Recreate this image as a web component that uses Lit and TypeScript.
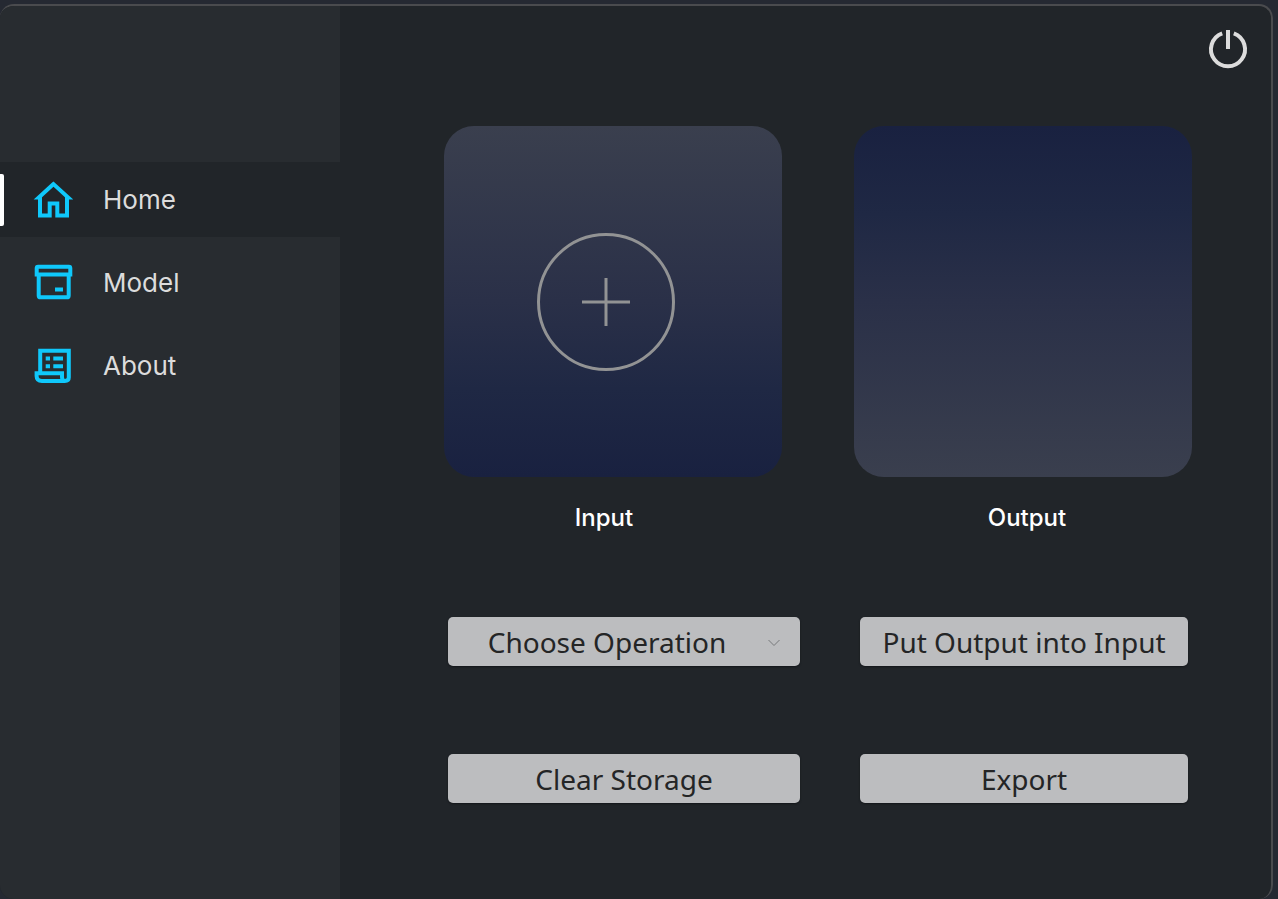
import { LitElement, html, css, svg } from "lit";
import { customElement, state } from "lit/decorators.js";
import { classMap } from "lit/directives/class-map.js";

const homeIcon = svg`
  <path d="M20.5 4.1 5.8 17.5H7V35.5H16.7V23.5H24.3V35.5H34V17.5H35.2Z" />`;

const modelIcon = svg`
  <path d="M3.7 5.2Q3.7 3.8 5.1 3.8H35.9Q37.3 3.8 37.3 5.2V11.5H3.7Z" />
  <path d="M5.7 11.5V32.4Q5.7 34.3 7.6 34.3H33.8Q35.7 34.3 35.7 32.4V11.5" />
  <path class="solid" d="M22 24.5H30V28.5H22Z" />`;

const aboutIcon = svg`
  <path d="M7.2 27V4.7H35.8V31.5Q35.8 34.9 31.8 34.9H9Q3.6 34.9 3.6 30V27.3H29V31Q29 34.9 32 34.9" />
  <path class="solid" d="M12.7 10.5H17V14.5H12.7ZM20.3 10.5H30V14.5H20.3ZM12.7 18.2H17V22.2H12.7ZM20.3 18.2H30V22.2H20.3Z" />`;

const pages = [
  { name: "Home", icon: homeIcon },
  { name: "Model", icon: modelIcon },
  { name: "About", icon: aboutIcon },
];

@customElement("app-root")
export class AppRoot extends LitElement {
  static styles = css`
    :host {
      box-sizing: border-box;
      min-height: 100vh;
      padding: 4px 5px 0 0;
      background: #252932;
      display: flex;
    }
    *,
    *::before {
      box-sizing: border-box;
    }
    button,
    select {
      font: inherit;
      color: inherit;
      border: 0;
      cursor: pointer;
    }
    .window {
      flex: 1;
      display: grid;
      grid-template-columns: 340px 1fr;
      border: 2px solid #4a4b4e;
      border-width: 2px 2px 0 0;
      border-radius: 14px;
      overflow: hidden;
      background: #212529;
    }
    .sidebar {
      background: #282c30;
      padding-top: 156px;
    }
    .nav {
      display: flex;
      flex-direction: column;
      gap: 8px;
    }
    .link {
      display: flex;
      align-items: center;
      height: 75px;
      color: #dcdcdc;
      font: 26px/32px Inter, sans-serif;
      text-decoration: none;
    }
    .link::before {
      content: "";
      width: 4px;
      height: 52px;
      border-radius: 0 2px 2px 0;
    }
    .link.active {
      background: #212529;
    }
    .link.active::before {
      background: #fff;
    }
    .link svg {
      width: 40px;
      height: 40px;
      margin: 0 30px 0 29px;
      fill: none;
      stroke: #0fc8fb;
      stroke-width: 4;
    }
    .link .solid {
      fill: #0fc8fb;
      stroke: none;
    }
    .main {
      display: flex;
      flex-direction: column;
      padding: 20px 20px 40px 104px;
    }
    .power {
      align-self: flex-end;
      width: 46px;
      height: 46px;
      padding: 0;
      background: none;
    }
    .power svg {
      display: block;
      width: 46px;
      height: 46px;
      fill: none;
      stroke: #dcdcdc;
      stroke-width: 4;
    }
    .cards {
      display: grid;
      grid-template-columns: 1fr 1fr;
      gap: 72px;
      margin: 54px 59px 0 0;
      color: #fff;
      font: 500 24px/32px Inter, sans-serif;
      text-align: center;
    }
    .card {
      display: flex;
      flex-direction: column;
      gap: 25px;
      margin: 0;
    }
    .well {
      display: flex;
      align-items: center;
      justify-content: center;
      width: 100%;
      height: 351px;
      border-radius: 30px;
    }
    .input .well {
      padding: 0 14px 0 0;
      background: linear-gradient(#3a3f4e, #2a3048 50%, #1f2844 75%, #192140);
    }
    .output .well {
      background: linear-gradient(#192140, #1f2844 25%, #2a3048 50%, #3a3f4e);
    }
    .input figcaption {
      padding-right: 18px;
    }
    .output figcaption {
      padding-left: 8px;
    }
    .well svg {
      width: 140px;
      height: 140px;
      fill: none;
      stroke: #929394;
      stroke-width: 3;
    }
    .actions {
      display: grid;
      grid-template-columns: 352fr 328fr;
      gap: 88px 60px;
      margin: 83px 63px 0 4px;
      color: #242526;
      font: 28px/40px "Noto Sans", sans-serif;
    }
    .action {
      width: 100%;
      height: 49px;
      padding: 0;
      border-radius: 5px;
      background: #bcbdbf;
      box-shadow: 0 1px 2px #14171a;
      white-space: nowrap;
    }
    .picker {
      display: grid;
      align-items: center;
    }
    .picker > * {
      grid-area: 1 / 1;
    }
    .picker select {
      appearance: none;
      padding: 0 34px 0 0;
      text-align: center;
      text-align-last: center;
    }
    .picker svg {
      justify-self: end;
      width: 12px;
      height: 8px;
      margin: 2px 20px 0 0;
      fill: none;
      stroke: #77797b;
      pointer-events: none;
    }
  `;

  @state() private page = "Home";

  private open(event: Event, name: string) {
    event.preventDefault();
    this.page = name;
  }

  render() {
    return html`
      <div class="window">
        <aside class="sidebar">
          <nav class="nav">
            ${pages.map(
              ({ name, icon }) => html`
                <a
                  class=${classMap({ link: true, active: name === this.page })}
                  href="#${name.toLowerCase()}"
                  @click=${(e: Event) => this.open(e, name)}
                >
                  <svg viewBox="0 0 40 40" aria-hidden="true">${icon}</svg>
                  <span>${name}</span>
                </a>
              `
            )}
          </nav>
        </aside>
        <main class="main">
          <button class="power" aria-label="Power">
            <svg viewBox="0 0 46 46">
              <path d="M17.2 7.3A17 17 0 1 0 28.8 7.3" />
              <path d="M23 4V23" />
            </svg>
          </button>
          <section class="cards">
            <figure class="card input">
              <button class="well" aria-label="Add input">
                <svg viewBox="0 0 140 140">
                  <circle cx="70" cy="70" r="67.5" />
                  <path d="M70 46V94M46 70H94" />
                </svg>
              </button>
              <figcaption>Input</figcaption>
            </figure>
            <figure class="card output">
              <div class="well"></div>
              <figcaption>Output</figcaption>
            </figure>
          </section>
          <section class="actions">
            <label class="picker">
              <select class="action" aria-label="Operation">
                <option>Choose Operation</option>
              </select>
              <svg viewBox="0 0 12 8"><path d="M.5 1 6 6.5 11.5 1" /></svg>
            </label>
            <button class="action">Put Output into Input</button>
            <button class="action">Clear Storage</button>
            <button class="action">Export</button>
          </section>
        </main>
      </div>
    `;
  }
}
